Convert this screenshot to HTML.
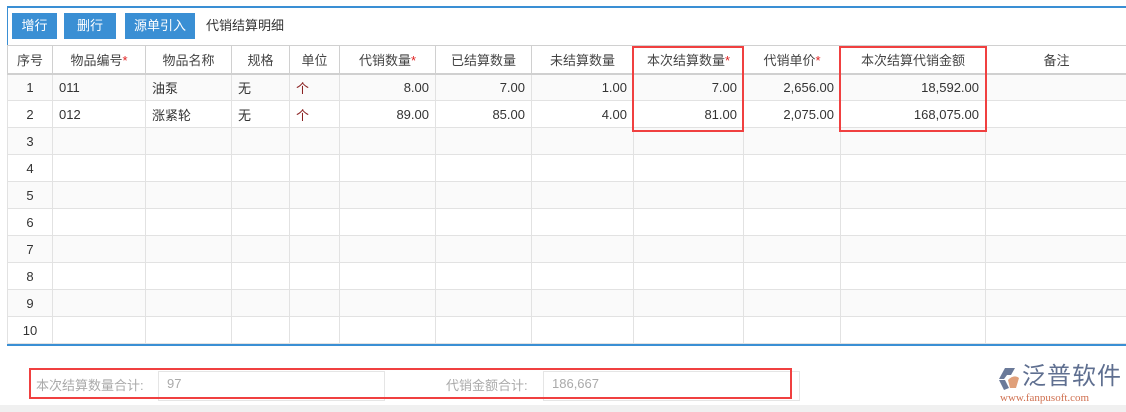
<!DOCTYPE html>
<html><head><meta charset="utf-8"><style>
*{box-sizing:border-box;margin:0;padding:0}
body{width:1126px;height:412px;background:#fff;font-family:"Liberation Sans","Noto Sans CJK SC",sans-serif;font-size:13px;color:#333;position:relative;overflow:hidden}
.abs{position:absolute}
.btn{position:absolute;top:13px;height:26px;background:#3a8fd4;color:#fff;font-size:13px;line-height:26px;text-align:center}
table{position:absolute;left:7px;top:45px;border-collapse:collapse;table-layout:fixed;width:1120px}
td,th{border:1px solid #e2e2e2;height:27px;font-weight:normal;padding:0 6px;white-space:nowrap;overflow:hidden}
th{text-align:center;color:#444;border-color:#d0d0d0;border-bottom:2px solid #d0d0d0;height:28px}
tr:nth-child(even) td{background:#fafafa}
td.r{text-align:right}
td.c{text-align:center}
.s{color:#e02020}
.red{position:absolute;border:2px solid #f04040}
</style></head><body>
<div class="abs" style="left:7px;top:6px;width:1119px;height:2px;background:#3a8fd4"></div>
<div class="abs" style="left:7px;top:6px;width:1px;height:340px;background:#3a8fd4"></div>
<div class="abs" style="left:7px;top:344px;width:1119px;height:2px;background:#3a8fd4"></div>
<div class="btn" style="left:12px;width:45px">增行</div>
<div class="btn" style="left:64px;width:52px">删行</div>
<div class="btn" style="left:125px;width:70px">源单引入</div>
<div class="abs" style="left:206px;top:16px;line-height:20px">代销结算明细</div>
<table>
<colgroup><col style="width:45px"><col style="width:93px"><col style="width:86px"><col style="width:58px"><col style="width:50px"><col style="width:96px"><col style="width:96px"><col style="width:102px"><col style="width:110px"><col style="width:97px"><col style="width:145px"><col style="width:142px"></colgroup>
<tr><th>序号</th><th>物品编号<span class="s">*</span></th><th>物品名称</th><th>规格</th><th>单位</th><th>代销数量<span class="s">*</span></th><th>已结算数量</th><th>未结算数量</th><th>本次结算数量<span class="s">*</span></th><th>代销单价<span class="s">*</span></th><th>本次结算代销金额</th><th>备注</th></tr>
<tr><td class="c">1</td><td>011</td><td>油泵</td><td>无</td><td style="color:#8a2020">个</td><td class="r">8.00</td><td class="r">7.00</td><td class="r">1.00</td><td class="r">7.00</td><td class="r">2,656.00</td><td class="r">18,592.00</td><td></td></tr>
<tr><td class="c">2</td><td>012</td><td>涨紧轮</td><td>无</td><td style="color:#8a2020">个</td><td class="r">89.00</td><td class="r">85.00</td><td class="r">4.00</td><td class="r">81.00</td><td class="r">2,075.00</td><td class="r">168,075.00</td><td></td></tr>
<tr><td class="c">3</td><td></td><td></td><td></td><td></td><td></td><td></td><td></td><td></td><td></td><td></td><td></td></tr>
<tr><td class="c">4</td><td></td><td></td><td></td><td></td><td></td><td></td><td></td><td></td><td></td><td></td><td></td></tr>
<tr><td class="c">5</td><td></td><td></td><td></td><td></td><td></td><td></td><td></td><td></td><td></td><td></td><td></td></tr>
<tr><td class="c">6</td><td></td><td></td><td></td><td></td><td></td><td></td><td></td><td></td><td></td><td></td><td></td></tr>
<tr><td class="c">7</td><td></td><td></td><td></td><td></td><td></td><td></td><td></td><td></td><td></td><td></td><td></td></tr>
<tr><td class="c">8</td><td></td><td></td><td></td><td></td><td></td><td></td><td></td><td></td><td></td><td></td><td></td></tr>
<tr><td class="c">9</td><td></td><td></td><td></td><td></td><td></td><td></td><td></td><td></td><td></td><td></td><td></td></tr>
<tr><td class="c">10</td><td></td><td></td><td></td><td></td><td></td><td></td><td></td><td></td><td></td><td></td><td></td></tr>
</table>
<div class="red" style="left:632px;top:46px;width:112px;height:86px"></div>
<div class="red" style="left:839px;top:46px;width:148px;height:86px"></div>
<div class="abs" style="left:158px;top:371px;width:227px;height:30px;border:1px solid #e5e5e5;color:#aaa;padding:4px 8px">97</div>
<div class="abs" style="left:543px;top:371px;width:257px;height:30px;border:1px solid #e5e5e5;color:#aaa;padding:4px 8px">186,667</div>
<div class="abs" style="left:36px;top:375px;color:#aaa">本次结算数量合计:</div>
<div class="abs" style="left:446px;top:375px;color:#aaa">代销金额合计:</div>
<div class="red" style="left:29px;top:368px;width:763px;height:31px"></div>
<div class="abs" style="left:0;top:405px;width:1126px;height:7px;background:#f0f0f0"></div>
<svg class="abs" style="left:997px;top:366px" width="24" height="26" viewBox="0 0 24 26"><path d="M2 13 L8 2 H18 L14 9 H10 L7 13 Z" fill="#6b7a99"/><path d="M7 24 L2 14 H8 L12 22 Z" fill="#6b7a99"/><path d="M11 14 Q17 8 22 12 L19 22 H13 Z" fill="#e0a07a"/></svg>
<div class="abs" style="left:1022px;top:362px;font-size:24px;color:#5f6f90;letter-spacing:1px;line-height:30px">泛普软件</div>
<div class="abs" style="left:1000px;top:392px;font-size:11px;color:#d07050;font-family:'Liberation Serif',serif">www.fanpusoft.com</div>
</body></html>
